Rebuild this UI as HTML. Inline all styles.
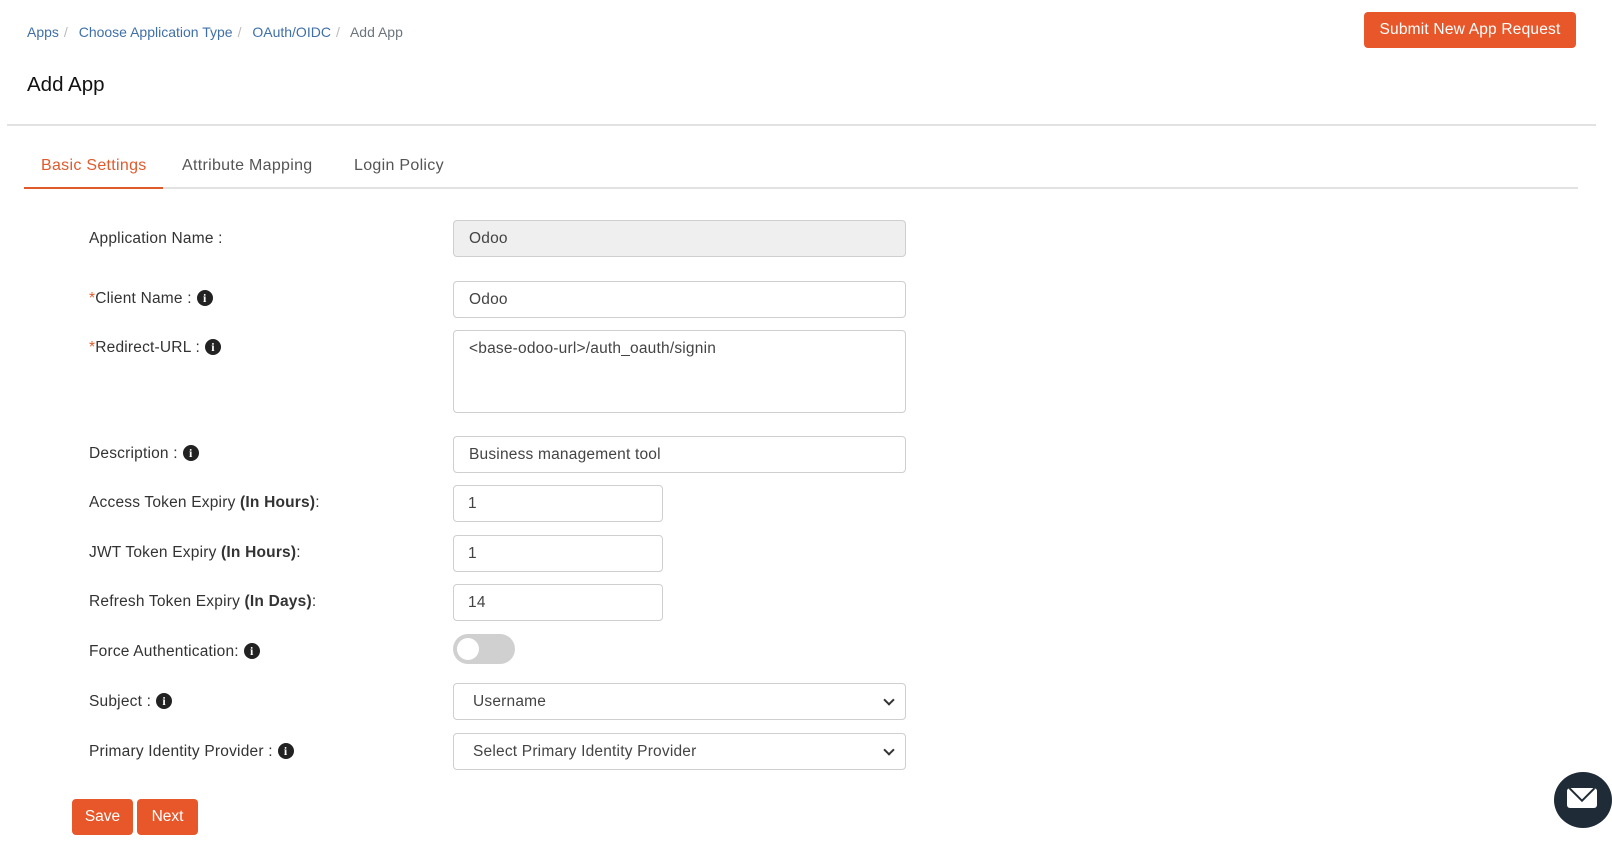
<!DOCTYPE html>
<html><head><meta charset="utf-8"><style>
*{box-sizing:border-box;margin:0;padding:0}
body{width:1612px;height:843px;background:#fff;font-family:"Liberation Sans",sans-serif;color:#333;position:relative;overflow:hidden}
.a{position:absolute}
.bc{top:24px;left:27px;font-size:14px;color:#6c757d;white-space:nowrap}
.bc a{color:#3f6fa8;text-decoration:none}
.bc .s{color:#bbb;margin:0 7px 0 5px}
.sub{left:1364px;top:12px;width:212px;height:36px;background:#e8572a;border-radius:4px;color:#fff;font-size:15.5px;text-align:center;line-height:36px;letter-spacing:0.2px}
h1{position:absolute;left:27px;top:73px;font-size:20.5px;font-weight:normal;color:#111}
.hr{left:7px;top:124px;width:1589px;height:2px;background:#e2e2e2}
.tabs{top:157px;font-size:16px;color:#555;letter-spacing:0.3px}
.tl{left:24px;top:187px;width:1554px;height:2px;background:#e2e2e2}
.tu{left:24px;top:187px;width:139px;height:2px;background:#e05a2c}
.lbl{left:89px;font-size:15.5px;color:#333;white-space:nowrap;letter-spacing:0.2px}
.lbl b{font-weight:bold}
.req{color:#e05a2c}
.ic{display:inline-block;width:16px;height:16px;border-radius:50%;background:#222;color:#fff;font-size:12px;font-weight:bold;text-align:center;line-height:16px;font-family:"Liberation Serif",serif;vertical-align:1px;margin-left:5px}
.in{left:453px;width:453px;height:37px;border:1px solid #cfcfcf;border-radius:4px;font-size:15.5px;color:#444;padding-left:15px;line-height:35px;background:#fff;letter-spacing:0.2px}
.sm{width:210px;padding-left:14px}
.sel{padding-left:19px}
.sel:after{content:"";position:absolute;right:12px;top:12px;width:6px;height:6px;border-right:2px solid #333;border-bottom:2px solid #333;transform:rotate(45deg)}
.btn{top:799px;height:36px;background:#e8572a;color:#fff;border-radius:4px;font-size:15.5px;text-align:center;line-height:36px}
</style></head><body>
<div class="a bc"><a>Apps</a><span class="s">/</span> <a>Choose Application Type</a><span class="s">/</span> <a>OAuth/OIDC</a><span class="s">/</span> Add App</div>
<div class="a sub">Submit New App Request</div>
<h1>Add App</h1>
<div class="a hr"></div>
<div class="a tabs" style="left:41px;color:#e05a2c">Basic Settings</div>
<div class="a tabs" style="left:182px">Attribute Mapping</div>
<div class="a tabs" style="left:354px">Login Policy</div>
<div class="a tl"></div><div class="a tu"></div>

<div class="a lbl" style="top:230px">Application Name :</div>
<div class="a in" style="top:220px;background:#efefef">Odoo</div>

<div class="a lbl" style="top:290px"><span class="req">*</span>Client Name :<span class="ic">i</span></div>
<div class="a in" style="top:281px">Odoo</div>

<div class="a lbl" style="top:339px"><span class="req">*</span>Redirect-URL :<span class="ic">i</span></div>
<div class="a in" style="top:330px;height:83px;line-height:20px;padding-top:8px">&lt;base-odoo-url&gt;/auth_oauth/signin</div>

<div class="a lbl" style="top:445px">Description :<span class="ic">i</span></div>
<div class="a in" style="top:436px">Business management tool</div>

<div class="a lbl" style="top:494px">Access Token Expiry <b>(In Hours)</b>:</div>
<div class="a in sm" style="top:485px">1</div>

<div class="a lbl" style="top:544px">JWT Token Expiry <b>(In Hours)</b>:</div>
<div class="a in sm" style="top:535px">1</div>

<div class="a lbl" style="top:593px">Refresh Token Expiry <b>(In Days)</b>:</div>
<div class="a in sm" style="top:584px">14</div>

<div class="a lbl" style="top:643px">Force Authentication:<span class="ic">i</span></div>
<div class="a" style="left:453px;top:634px;width:62px;height:30px;border-radius:15px;background:#d0d0d0"><div style="position:absolute;left:4px;top:4px;width:22px;height:22px;border-radius:50%;background:#fff"></div></div>

<div class="a lbl" style="top:693px">Subject :<span class="ic">i</span></div>
<div class="a in sel" style="top:683px">Username</div>

<div class="a lbl" style="top:743px">Primary Identity Provider :<span class="ic">i</span></div>
<div class="a in sel" style="top:733px">Select Primary Identity Provider</div>

<div class="a btn" style="left:72px;width:61px">Save</div>
<div class="a btn" style="left:137px;width:61px">Next</div>

<div class="a" style="left:1554px;top:772px;width:58px;height:56px;border-radius:50%;background:#1f2b36">
<div style="position:absolute;left:13px;top:16px;width:30px;height:20px;background:#fff;border-radius:3px;overflow:hidden"><div style="position:absolute;left:5px;top:-10px;width:20px;height:20px;border:2px solid #1f2b36;transform:rotate(45deg)"></div></div>
</div>
</body></html>
